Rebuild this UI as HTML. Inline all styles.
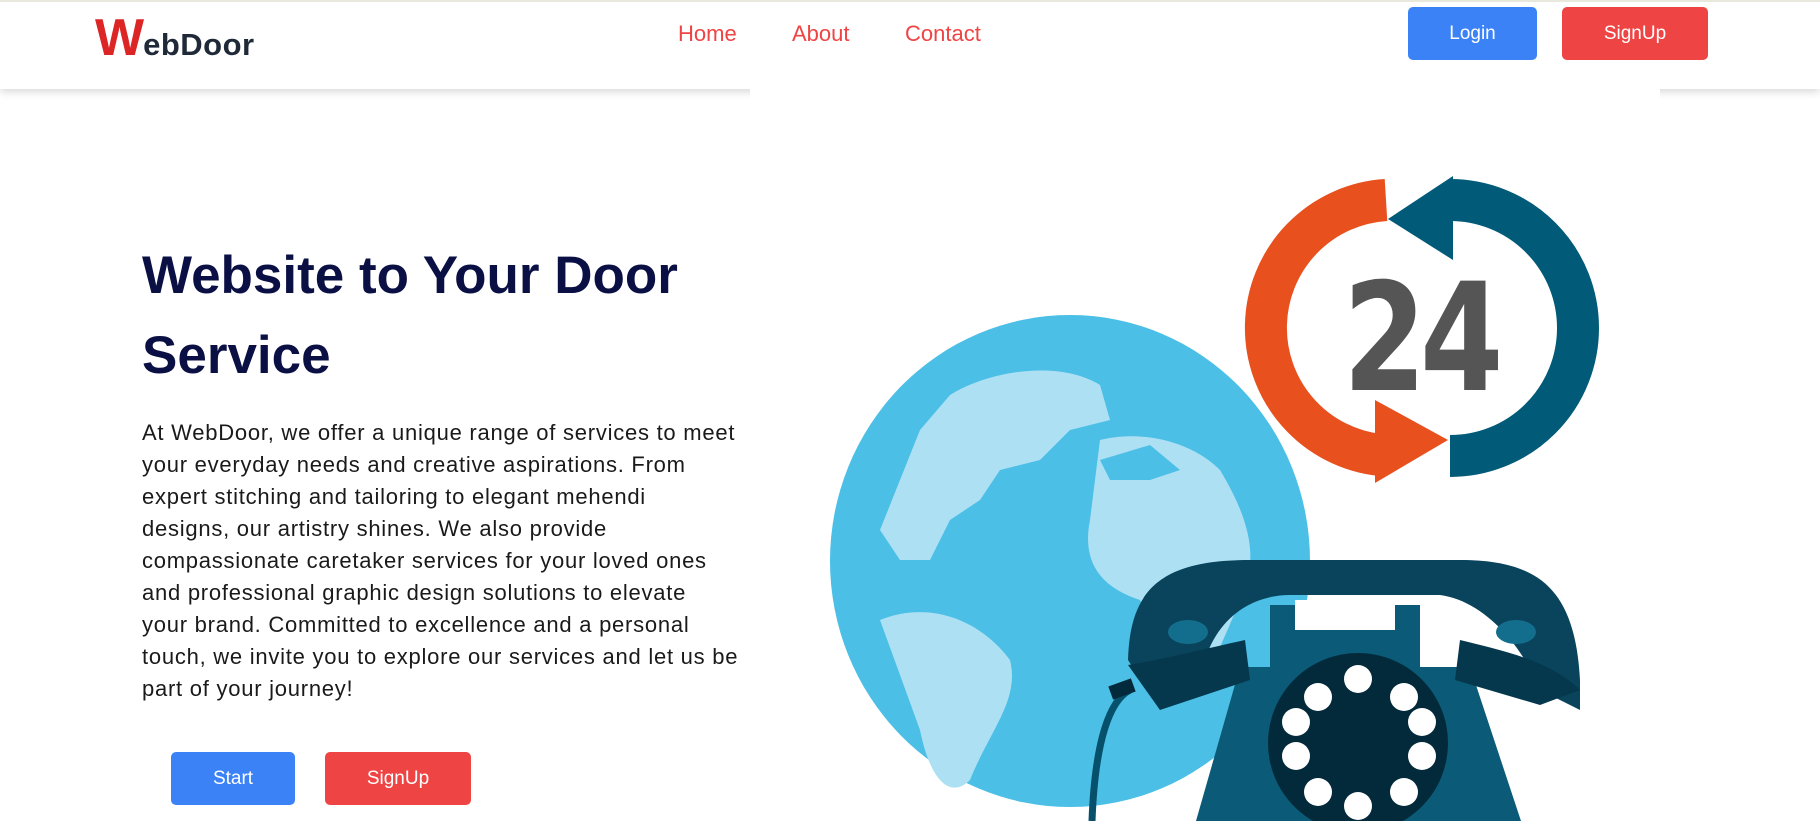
<!DOCTYPE html>
<html><head><meta charset="utf-8"><style>
*{margin:0;padding:0;box-sizing:border-box}
body{width:1820px;height:821px;overflow:hidden;background:#fff;font-family:"Liberation Sans",sans-serif;position:relative}
.topline{position:absolute;left:0;top:0;width:1820px;height:2px;background:#e8e8dc}
header{position:absolute;left:0;top:0;width:1820px;height:89px;background:#fff;box-shadow:0 3px 8px rgba(0,0,0,0.15)}
.logo{position:absolute;left:95px;top:8px;white-space:nowrap}
.logo .w{color:#dc2626;font-weight:bold;font-size:52px;letter-spacing:-1px}
.logo .r{color:#1f2937;font-weight:bold;font-size:31px;letter-spacing:0.5px}
nav a{position:absolute;top:21px;color:#ef4444;font-size:22px;text-decoration:none}
.btn{position:absolute;color:#fff;font-size:19px;display:flex;align-items:center;justify-content:center;border-radius:5px}
.imgbg{position:absolute;left:750px;top:82px;width:910px;height:739px;background:#fff}
h1{position:absolute;left:142px;top:236px;color:#0a0f44;font-size:53px;line-height:80px;font-weight:bold}
p{position:absolute;left:142px;top:417px;color:#1a1a1a;font-size:22px;line-height:32px;white-space:nowrap;letter-spacing:0.75px}
svg{position:absolute;left:0;top:0}
</style></head><body>
<header>
<div class="topline"></div>
<div class="logo"><span class="w">W</span><span class="r">ebDoor</span></div>
<nav><a style="left:678px">Home</a><a style="left:792px">About</a><a style="left:905px">Contact</a></nav>
<div class="btn" style="left:1408px;top:7px;width:129px;height:53px;background:#3b82f6">Login</div>
<div class="btn" style="left:1562px;top:7px;width:146px;height:53px;background:#ef4444">SignUp</div>
</header>
<div class="imgbg"></div>
<svg width="1820" height="821" viewBox="0 0 1820 821">
<ellipse cx="1070" cy="561" rx="240" ry="246" fill="#4bbfe6"/>
<path d="M950 395 C990 370 1060 360 1100 385 L1110 420 1070 430 1040 460 1000 470 980 500 950 520 930 560 900 560 880 530 900 480 920 430Z" fill="#aee0f4"/>
<path d="M880 620 C930 600 980 620 1010 660 1020 700 990 730 970 780 950 800 930 780 920 730 890 680Z" fill="#aee0f4"/>
<path d="M1100 440 C1140 430 1190 440 1220 470 1250 520 1260 560 1240 600 1220 650 1200 690 1190 700 1170 690 1160 640 1140 600 1110 590 1080 570 1090 520 1080 480Z" fill="#aee0f4"/>
<path d="M1100 460 L1150 445 1180 470 1150 480 1110 480Z" fill="#4bbfe6"/>
<path d="M1386 200 A128 128 0 0 0 1380 455" fill="none" stroke="#e8501e" stroke-width="42"/>
<path d="M1375 400 L1448 440 1375 483Z" fill="#e8501e"/>
<path d="M1450 200 A128 128 0 0 1 1450 456" fill="none" stroke="#005a78" stroke-width="42"/>
<path d="M1453 176 L1388 219 1453 260Z" fill="#005a78"/>
<text x="1420" y="390" text-anchor="middle" font-family="DejaVu Sans" font-weight="bold" font-size="150" fill="#555" transform="translate(1420 0) scale(0.8 1) translate(-1420 0)" letter-spacing="-8">24</text>
<path d="M1092 821 C1095 740 1110 700 1130 690" fill="none" stroke="#06506b" stroke-width="7"/>
<path d="M1196 821 L1240 667 L1470 667 L1521 821Z" fill="#0b5a78"/>
<rect x="1270" y="605" width="150" height="65" fill="#0b5a78"/>
<rect x="1295" y="600" width="100" height="30" fill="#fff"/>
<path d="M1128 660 C1130 590 1160 560 1250 560 L1460 560 C1540 560 1575 590 1580 680 L1580 710 L1540 690 C1520 640 1480 600 1440 595 L1290 595 C1250 595 1210 620 1200 680 L1160 710Z" fill="#09445c"/>
<path d="M1128 665 L1160 710 L1250 680 L1245 640 C1200 650 1160 660 1128 665Z" fill="#06384d"/>
<path d="M1580 690 L1540 705 L1455 680 L1460 640 C1500 650 1550 660 1580 690Z" fill="#06384d"/>
<rect x="1110" y="682" width="24" height="14" fill="#022a3a" transform="rotate(-20 1122 689)"/>
<ellipse cx="1188" cy="632" rx="20" ry="12" fill="#126e8c"/>
<ellipse cx="1516" cy="632" rx="20" ry="12" fill="#126e8c"/>
<circle cx="1358" cy="743" r="90" fill="#022a3a"/>
<g fill="#fff">
<circle cx="1358" cy="679" r="14"/><circle cx="1404" cy="697" r="14"/><circle cx="1422" cy="722" r="14"/><circle cx="1422" cy="756" r="14"/><circle cx="1404" cy="792" r="14"/><circle cx="1358" cy="806" r="14"/><circle cx="1318" cy="792" r="14"/><circle cx="1296" cy="756" r="14"/><circle cx="1296" cy="722" r="14"/><circle cx="1318" cy="697" r="14"/>
</g>
</svg>
<h1>Website to Your Door<br>Service</h1>
<p>At WebDoor, we offer a unique range of services to meet<br>your everyday needs and creative aspirations. From<br>expert stitching and tailoring to elegant mehendi<br>designs, our artistry shines. We also provide<br>compassionate caretaker services for your loved ones<br>and professional graphic design solutions to elevate<br>your brand. Committed to excellence and a personal<br>touch, we invite you to explore our services and let us be<br>part of your journey!</p>
<div class="btn" style="left:171px;top:752px;width:124px;height:53px;background:#3b82f6">Start</div>
<div class="btn" style="left:325px;top:752px;width:146px;height:53px;background:#ef4444">SignUp</div>
</body></html>
